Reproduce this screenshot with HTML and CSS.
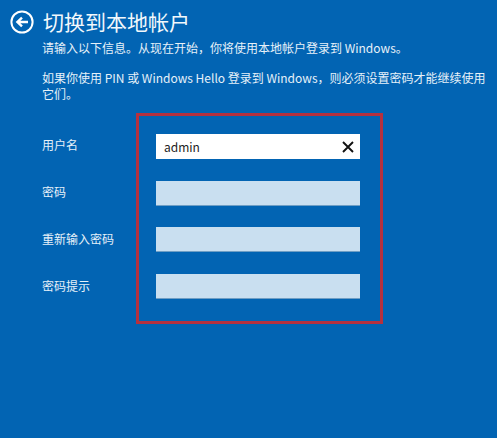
FILE: index.html
```html
<!DOCTYPE html>
<html lang="zh-CN">
<head>
  <meta charset="UTF-8">
  <meta name="viewport" content="width=device-width, initial-scale=1.0">
  <title>切换到本地帐户</title>
  <link rel="stylesheet" href="styles.css">
</head>
<body>
  <div class="header">
    <svg class="back-icon" viewBox="0 0 24 24" width="24" height="24" fill="none" stroke="#fff">
      <circle cx="12" cy="12" r="10.6" stroke-width="2"/>
      <path d="M18 12H8M12 7.6L7.4 12l4.6 4.4" stroke-width="2.4"/>
    </svg>
    <h1>切换到本地帐户</h1>
  </div>
  <div class="content">
    <p class="intro">请输入以下信息。从现在开始，你将使用本地帐户登录到 Windows。</p>
    <p class="note">如果你使用 PIN 或 Windows Hello 登录到 Windows，则必须设置密码才能继续使用它们。</p>
    <div class="form">
      <div class="labels">
        <label>用户名</label>
        <label>密码</label>
        <label>重新输入密码</label>
        <label>密码提示</label>
      </div>
      <div class="fields">
        <div class="field active">
          <span>admin</span>
          <svg class="clear-icon" viewBox="0 0 12 12" width="12" height="12" stroke="#111" stroke-width="1.9">
            <path d="M1 1l10 10M11 1L1 11"/>
          </svg>
        </div>
        <div class="field"></div>
        <div class="field"></div>
        <div class="field"></div>
      </div>
    </div>
  </div>
</body>
</html>
```

FILE: styles.css
```css
html, body {
  height: 100%;
}
body {
  margin: 0;
  padding: 10px 0 0 10px;
  box-sizing: border-box;
  background-color: #0264b3;
  color: #fff;
  font-family: "Noto Sans CJK SC", "Open Sans", sans-serif;
  overflow: hidden;
}
.header {
  display: flex;
  align-items: center;
  gap: 9px;
  height: 24px;
}
.back-icon {
  flex: none;
}
h1 {
  margin: -3px 0 0;
  font-size: 21px;
  font-weight: 400;
  line-height: 24px;
  color: #f2f8fc;
}
.content {
  margin-left: 32px;
  width: 447px;
  font-size: 12px;
  line-height: 16px;
  color: #e6f1f9;
}
.intro {
  margin: 6px 0 0;
}
.note {
  margin: 14px 0 0;
}
.form {
  display: flex;
  margin-top: 11px;
}
.labels {
  width: 94px;
  padding-top: 24px;
  display: flex;
  flex-direction: column;
  gap: 31px;
}
.labels label {
  display: block;
  line-height: 16px;
}
.fields {
  width: 247px;
  height: 211px;
  box-sizing: border-box;
  border: 3px solid #b5313f;
  padding: 18px 20px 0 17px;
  display: flex;
  flex-direction: column;
  gap: 21.7px;
}
.field {
  height: 25px;
  flex: none;
  background-color: #c9dff0;
  border-bottom: 1px solid #6f9ec4;
  box-sizing: border-box;
}
.field.active {
  display: flex;
  align-items: center;
  justify-content: space-between;
  padding: 0 6px 0 8px;
  background-color: #fff;
  border-bottom: 0;
  color: #222;
}
.clear-icon {
  flex: none;
}
```
